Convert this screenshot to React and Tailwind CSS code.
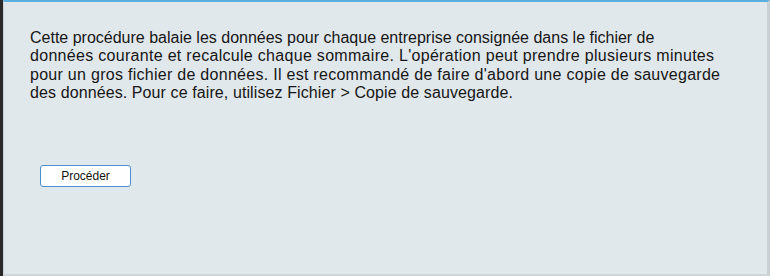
import React from 'react';

const lines = [
  { text: "Cette procédure balaie les données pour chaque entreprise consignée dans le fichier de", cls: "tracking-[0px]" },
  { text: "données courante et recalcule chaque sommaire. L'opération peut prendre plusieurs minutes", cls: "tracking-[0.3px]" },
  { text: "pour un gros fichier de données. Il est recommandé de faire d'abord une copie de sauvegarde", cls: "tracking-[0.28px]" },
  { text: "des données. Pour ce faire, utilisez Fichier > Copie de sauvegarde.", cls: "tracking-[0.1px]" },
];

export default function App() {
  return (
    <div className="w-[770px] h-[276px] flex">
      <div className="w-[3px] bg-[#2a2a2a]" />
      <div className="flex-1 flex flex-col bg-[#e1e8ec] border-t-2 border-t-[#5aaee0] border-l border-l-[#c9d2d7] border-r-[3px] border-r-[#c8d0d4] border-b-2 border-b-[#cfd6da]">
        <div className="pt-[27px] pl-[26px] text-[16px] leading-[18.3px] text-[#161616] font-['Liberation_Sans',sans-serif]">
          {lines.map((l, i) => (
            <div key={i} className={"whitespace-nowrap " + l.cls}>{l.text}</div>
          ))}
        </div>
        <div className="pl-[36px] pt-[63px]">
          <button className="w-[91px] h-[22px] bg-white border border-[#4a90d0] rounded-[3px] text-[12px] text-[#111] font-['Liberation_Sans',sans-serif] flex items-center justify-center">
            Procéder
          </button>
        </div>
      </div>
    </div>
  );
}
